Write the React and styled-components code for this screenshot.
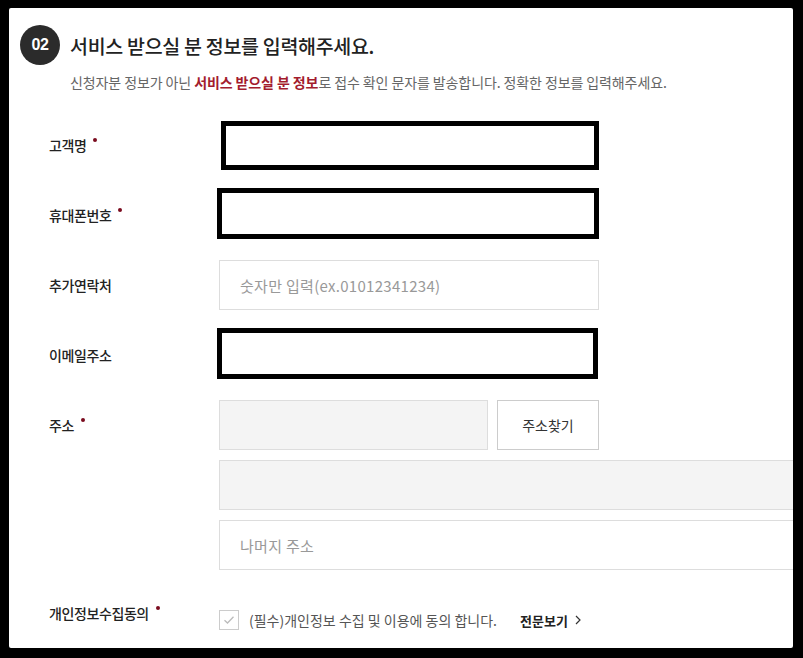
import React from "react";
import styled, { createGlobalStyle } from "styled-components";

const GlobalStyle = createGlobalStyle`
  html, body {
    margin: 0;
    padding: 0;
    background: #000;
  }
  body {
    font-family: "Noto Sans CJK KR", "Noto Sans", sans-serif;
  }
`;

// outer black frame of the capture
const Frame = styled.div`
  width: 803px;
  height: 658px;
  box-sizing: border-box;
  padding: 8px 10px 10px 9px;
  background: #000;
`;

const Panel = styled.div`
  height: 640px;
  box-sizing: border-box;
  padding: 17px 0 0 11px;
  background: #fff;
  overflow: hidden;
  border-radius: 2px;
`;

const Header = styled.div`
  display: flex;
  align-items: center;
  gap: 10px;
`;

const Badge = styled.div`
  width: 40px;
  height: 40px;
  border-radius: 50%;
  background: #2b2b2b;
  color: #fff;
  display: flex;
  align-items: center;
  justify-content: center;
  font-family: "Liberation Sans", Arial, sans-serif;
  font-size: 16px;
  font-weight: 700;
  letter-spacing: -0.5px;
`;

const Title = styled.h2`
  margin: 0;
  font-size: 19.5px;
  font-weight: 500;
  color: #222;
  letter-spacing: -0.3px;
`;

const Notice = styled.p`
  margin: 7px 0 0 50px;
  font-size: 14px;
  line-height: 20px;
  color: #666;
  letter-spacing: -0.1px;

  strong {
    color: #a31c2e;
    font-weight: 700;
  }
`;

const Form = styled.div`
  display: grid;
  grid-template-columns: 170px 1fr;
  row-gap: 20px;
  margin: 28px 0 0 29px;
`;

const Label = styled.div`
  height: ${(p) => (p.$top ? "auto" : "50px")};
  padding-top: ${(p) => p.$top || 0}px;
  display: flex;
  align-items: ${(p) => (p.$top ? "flex-start" : "center")};
  font-size: 14px;
  line-height: 20px;
  font-weight: 500;
  color: #222;
  letter-spacing: -0.4px;
`;

const Required = styled.span`
  display: inline-block;
  width: 4px;
  height: 4px;
  border-radius: 50%;
  background: #7a0b1e;
  margin-left: 7px;
  vertical-align: 9px;
`;

const Input = styled.input`
  box-sizing: border-box;
  width: ${(p) => p.$w || 380}px;
  height: 50px;
  padding: 0 20px;
  border: 1px solid #ddd;
  background: ${(p) => (p.$gray ? "#f4f4f4" : "#fff")};
  font-family: inherit;
  font-size: 15px;
  letter-spacing: 0.3px;
  color: #333;
  outline: none;

  &::placeholder {
    color: #999;
  }
`;

// black boxes that cover personal data in the capture
const Redacted = styled.div`
  box-sizing: border-box;
  width: ${(p) => p.$w}px;
  height: ${(p) => p.$h}px;
  margin-left: ${(p) => p.$dx}px;
  margin-top: ${(p) => p.$dy}px;
  border: 5px solid #000;
  background: #fff;
`;

const Stack = styled.div`
  display: flex;
  flex-direction: column;
  gap: 10px;
`;

const Line = styled.div`
  display: flex;
  gap: 9px;
`;

const Button = styled.button`
  box-sizing: border-box;
  width: 102px;
  height: 50px;
  border: 1px solid #ccc;
  background: #fff;
  font-family: inherit;
  font-size: 14px;
  color: #333;
  cursor: pointer;
`;

const Agree = styled.div`
  display: flex;
  align-items: center;
  padding-top: 20px;
  font-size: 14px;
  color: #555;
  letter-spacing: 0;
`;

const Check = styled.span`
  box-sizing: border-box;
  width: 20px;
  height: 20px;
  border: 1px solid #ccc;
  display: flex;
  align-items: center;
  justify-content: center;
  margin-right: 10px;
`;

const More = styled.a`
  display: flex;
  align-items: center;
  gap: 7px;
  margin-left: 23px;
  font-size: 13px;
  font-weight: 700;
  color: #222;
  text-decoration: none;
`;

const App = () => {
  return (
    <Frame>
      <GlobalStyle />
      <Panel>
        <Header>
          <Badge>02</Badge>
          <Title>서비스 받으실 분 정보를 입력해주세요.</Title>
        </Header>
        <Notice>
          신청자분 정보가 아닌 <strong>서비스 받으실 분 정보</strong>로 접수 확인 문자를 발송합니다. 정확한 정보를 입력해주세요.
        </Notice>

        <Form>
          <Label>
            <span>
              고객명<Required />
            </span>
          </Label>
          <Redacted $w={378} $h={49} $dx={2} $dy={1} />

          <Label>
            <span>
              휴대폰번호<Required />
            </span>
          </Label>
          <Redacted $w={382} $h={51} $dx={-2} $dy={-2} />

          <Label>추가연락처</Label>
          <Input placeholder="숫자만 입력(ex.01012341234)" />

          <Label>이메일주소</Label>
          <Redacted $w={381} $h={51} $dx={-2} $dy={-2} />

          <Label $top={15}>
            <span>
              주소<Required />
            </span>
          </Label>
          <Stack>
            <Line>
              <Input $gray $w={269} readOnly />
              <Button>주소찾기</Button>
            </Line>
            <Input $gray $w={600} readOnly />
            <Input $w={600} placeholder="나머지 주소" />
          </Stack>

          <Label $top={13}>
            <span>
              개인정보수집동의<Required />
            </span>
          </Label>
          <Agree>
            <Check>
              <svg width="12" height="10" viewBox="0 0 12 10">
                <path d="M1.5 5.2 L4.5 8 L10.5 1.8" fill="none" stroke="#bbb" strokeWidth="1.3" />
              </svg>
            </Check>
            (필수)개인정보 수집 및 이용에 동의 합니다.
            <More href="#">
              전문보기
              <svg width="6" height="10" viewBox="0 0 6 10">
                <path d="M1 1 L5 5 L1 9" fill="none" stroke="#333" strokeWidth="1.2" />
              </svg>
            </More>
          </Agree>
        </Form>
      </Panel>
    </Frame>
  );
};

export default App;
